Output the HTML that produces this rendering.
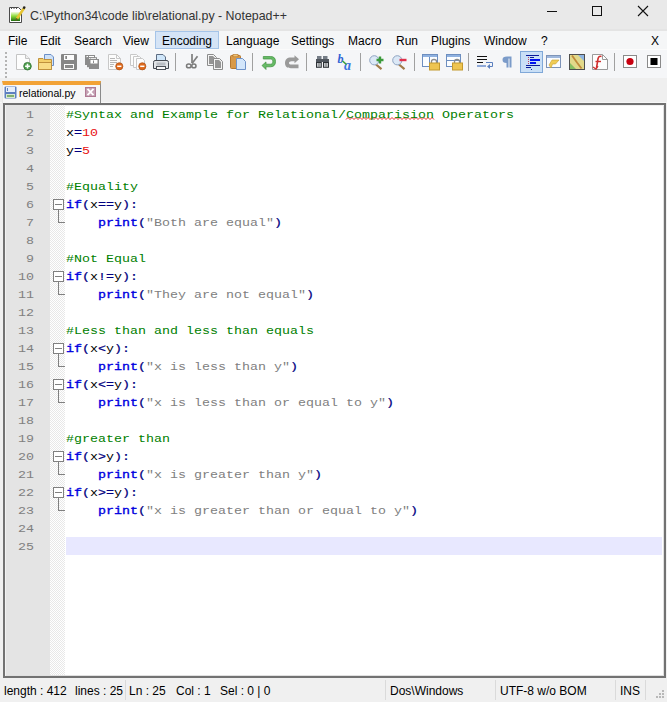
<!DOCTYPE html>
<html><head><meta charset="utf-8">
<style>
*{margin:0;padding:0;box-sizing:border-box}
html,body{width:667px;height:702px;overflow:hidden;background:#f0f0f0;font-family:"Liberation Sans",sans-serif;}
.abs{position:absolute}
#title{left:0;top:0;width:667px;height:31px;background:#e9e9e9;box-shadow:inset 0 -2px 0 #e4e4e4}
#ttext{left:30px;top:9px;font-size:12.4px;color:#333;white-space:nowrap}
#menu{left:0;top:31px;width:667px;height:18px;background:#f5f6f7}
.mi{position:absolute;margin-top:1px;font-size:12px;color:#000;white-space:nowrap}
#enc{left:155px;top:31px;width:64px;height:18px;background:#d5e4f6;border:1px solid #a5c4e8}
#toolbar{left:0;top:49px;width:667px;height:29px;background:#f5f6f8;border-top:1px solid #fbfbfb}
#tabbar{left:0;top:78px;width:667px;height:25px;background:#efefef;box-shadow:inset 0 -1px 0 #f8f8f8}
#tab{left:2px;top:81px;width:99px;height:23px;background:#f7f7f7;border-left:1px solid #e8e8e8;border-right:1px solid #8a8a8a;border-top:4px solid #f2a235}
#tabtext{left:19px;top:87px;font-size:10.5px;color:#000;white-space:nowrap}
#editor{left:3px;top:103px;width:663px;height:575px;background:#fff;border:2px solid #727272;box-shadow:inset 1px 1px 0 #f2f2f2, inset -1px -1px 0 #e0e0e0}
#lnm{left:6px;top:105px;width:44px;height:570px;background:#e4e4e4}
#fold{left:50px;top:105px;width:15px;height:570px;background-color:#fff;background-image:conic-gradient(#e8e8e8 25%,#fff 0 50%,#e8e8e8 0 75%,#fff 0);background-size:2px 2px}
#status{left:0;top:678px;width:667px;height:24px;background:#f0f0f0}
.st{position:absolute;top:684px;font-size:12px;color:#000;white-space:nowrap}
.code{position:absolute;left:66px;font-family:"Liberation Mono",monospace;font-size:13.33px;white-space:pre;line-height:18px;transform:translateY(1px) scaleY(0.82);transform-origin:0 13px}
.ln{position:absolute;left:6px;width:28px;text-align:right;font-family:"Liberation Mono",monospace;font-size:13.33px;color:#808080;line-height:18px;transform:translateY(0.5px) scaleY(0.86);transform-origin:0 13px}
.c{color:#008000}.n{color:#e81010}.k{color:#0000e0;-webkit-text-stroke:0.4px #0000e0}.o{color:#000080;-webkit-text-stroke:0.25px #000080}.s{color:#808080}.i{color:#000}
#curline{left:66px;top:537px;width:596px;height:18px;background:#e8e8ff}
.fb{position:absolute;left:53px;width:11px;height:11px;border:1px solid #808080;background:#fff}
.fb::after{content:"";position:absolute;left:1px;top:4px;width:7px;height:1px;background:#808080}
.fl{position:absolute;left:58px;width:1px;height:13px;background:#808080}
.fe{position:absolute;left:58px;width:7px;height:1px;background:#808080}
.ic{position:absolute;overflow:visible}
.sep{position:absolute;top:53px;width:1px;height:18px;background:#a0a0a0}
.pressed{position:absolute;left:520px;top:51px;width:23px;height:22px;background:#c9dff6;border:1px solid #80a8d8}
.ssep{position:absolute;top:680px;width:1px;height:20px;background:#dadada}
</style></head><body>
<div id="title" class="abs"></div>
<svg class="ic" style="left:9px;top:6px" width="17" height="17" viewBox="0 0 17 17"><defs><linearGradient id="gg" x1="0" y1="0" x2="0" y2="1"><stop offset="0" stop-color="#f4fbe0"/><stop offset="0.45" stop-color="#8fdc3c"/><stop offset="1" stop-color="#1f6e10"/></linearGradient></defs>
<path d="M0.5 1.5H9.5L12.5 4.5V16.5H0.5Z" fill="#fff" stroke="#4a4a4a"/>
<rect x="2" y="6" width="9" height="9" fill="url(#gg)"/>
<path d="M2 2.5H3M4.5 2.5H5.5M7 2.5H8" stroke="#555" stroke-width="1"/>
<path d="M15.5 1.5L8 12.5" stroke="#e6c431" stroke-width="2.6"/>
<path d="M15.8 0.5L14.5 2.8" stroke="#222" stroke-width="2.2"/>
<path d="M8 12.5L7 14.5" stroke="#6a5a20" stroke-width="1.5"/></svg>
<svg class="ic" style="left:540px;top:0px" width="127" height="30" viewBox="0 0 127 30">
<path d="M7 11.5H17" stroke="#111" stroke-width="1"/>
<rect x="52.5" y="6.5" width="9" height="9" fill="none" stroke="#111" stroke-width="1"/>
<path d="M98 6L108 16M108 6L98 16" stroke="#111" stroke-width="1.1"/>
</svg>
<div id="ttext" class="abs">C:\Python34\code lib\relational.py - Notepad++</div>
<div id="menu" class="abs"></div>
<div id="enc" class="abs"></div>
<div class="mi" style="left:8px;top:33px">File</div>
<div class="mi" style="left:40px;top:33px">Edit</div>
<div class="mi" style="left:74px;top:33px">Search</div>
<div class="mi" style="left:123px;top:33px">View</div>
<div class="mi" style="left:162px;top:33px">Encoding</div>
<div class="mi" style="left:226px;top:33px">Language</div>
<div class="mi" style="left:291px;top:33px">Settings</div>
<div class="mi" style="left:348px;top:33px">Macro</div>
<div class="mi" style="left:396px;top:33px">Run</div>
<div class="mi" style="left:431px;top:33px">Plugins</div>
<div class="mi" style="left:484px;top:33px">Window</div>
<div class="mi" style="left:541px;top:33px">?</div>
<div class="mi" style="left:651px;top:33px">X</div>
<div id="toolbar" class="abs"></div>
<!--ICONS-->
<svg class="ic" style="left:5px;top:52px" width="2" height="28" viewBox="0 0 2 28"><rect x="0" y="0" width="2" height="2" fill="#b4b4b4"/><rect x="0" y="4" width="2" height="2" fill="#b4b4b4"/><rect x="0" y="8" width="2" height="2" fill="#b4b4b4"/><rect x="0" y="12" width="2" height="2" fill="#b4b4b4"/><rect x="0" y="16" width="2" height="2" fill="#b4b4b4"/><rect x="0" y="20" width="2" height="2" fill="#b4b4b4"/><rect x="0" y="24" width="2" height="2" fill="#b4b4b4"/></svg>
<svg class="ic" style="left:16px;top:54px" width="16" height="16" viewBox="0 0 16 16"><path d="M0.5 0.5H9.5L13.5 4.5V15.5H0.5Z" fill="#fdfdfd" stroke="#c4c4c4"/><path d="M9.5 0.5V4.5H13.5" fill="#eee" stroke="#c4c4c4"/><circle cx="11.5" cy="12.2" r="3.8" fill="#4ea24e" stroke="#2f6f2f" stroke-width="0.8"/><path d="M11.5 9.8V14.6M9.1 12.2H13.9" stroke="#fff" stroke-width="1.6"/></svg>
<svg class="ic" style="left:38px;top:54px" width="16" height="16" viewBox="0 0 16 16"><path d="M6.5 0.5H13L15.5 3V11.5H6.5Z" fill="#cde0f7" stroke="#6a8ec6"/><path d="M0.5 4.5H5L6 5.5H13.5V15.5H0.5Z" fill="#f3cf6a" stroke="#bf913d"/><path d="M0.5 8.5H13.5V15.5H0.5Z" fill="#f8dc86" stroke="#bf913d"/></svg>
<svg class="ic" style="left:61px;top:54px" width="16" height="16" viewBox="0 0 16 16"><path d="M0 1Q0 0 1 0H15Q16 0 16 1V15Q16 16 15 16H1Q0 16 0 15Z" fill="#868686"/><rect x="3" y="1" width="10" height="5" fill="#fbfbfb"/><rect x="4.5" y="2" width="1.2" height="3" fill="#555"/><rect x="3" y="10" width="10" height="5" fill="#fbfbfb"/><rect x="4" y="11" width="8" height="3" fill="#8a8a8a"/></svg>
<svg class="ic" style="left:85px;top:55px" width="14" height="14" viewBox="0 0 14 14"><rect x="0" y="0" width="10" height="10" fill="#8c8c8c"/><rect x="1.5" y="1" width="1.5" height="1.3" fill="#fff"/><rect x="4" y="1" width="5" height="1.3" fill="#fff"/><rect x="2" y="2.2" width="10" height="10" fill="#8c8c8c"/><rect x="4" y="3.2" width="1.5" height="1.3" fill="#fff"/><rect x="6" y="3.2" width="5" height="1.3" fill="#fff"/><rect x="4" y="4" width="10" height="10" fill="#8c8c8c"/><rect x="5.5" y="5" width="7" height="3.5" fill="#fff"/><rect x="8" y="5.5" width="1" height="2.5" fill="#8c8c8c"/></svg>
<svg class="ic" style="left:107px;top:54px" width="16" height="16" viewBox="0 0 16 16"><path d="M1.5 0.5H9.5L13.5 4.5V15.5H1.5Z" fill="#fcfcfc" stroke="#c8c8c8"/><path d="M9.5 0.5V4.5H13.5" fill="none" stroke="#c8c8c8"/><path d="M3 4.5H8M3 6.5H10M3 8.5H10M3 10.5H7M3 12.5H6" stroke="#9a9a9a" stroke-width="0.7"/><circle cx="12.3" cy="12.3" r="3.6" fill="#e06a1c" stroke="#a8501a" stroke-width="0.7"/><path d="M10.2 12.3H14.4" stroke="#fff" stroke-width="1.5"/></svg>
<svg class="ic" style="left:130px;top:54px" width="16" height="16" viewBox="0 0 16 16"><path d="M0.5 0.5H6.5L8.5 2.5V11.5H0.5Z" fill="#fcfcfc" stroke="#c8c8c8"/><path d="M3.5 2.5H9.5L11.5 4.5V13.5H3.5Z" fill="#fcfcfc" stroke="#c8c8c8"/><path d="M6.5 4.5H12.5L14.5 6.5V15.5H6.5Z" fill="#fcfcfc" stroke="#c8c8c8"/><circle cx="12.3" cy="12.3" r="3.6" fill="#e06a1c" stroke="#a8501a" stroke-width="0.7"/><path d="M10.2 12.3H14.4" stroke="#fff" stroke-width="1.5"/></svg>
<svg class="ic" style="left:153px;top:54px" width="17" height="16" viewBox="0 0 17 16"><path d="M3.5 0.5H10L12.5 3V8.5H3.5Z" fill="#cfe6fa" stroke="#5d6c82"/><path d="M2 6.5Q0.5 6.5 0.5 8.5V14.5H15.5V8.5Q15.5 6.5 14 6.5Z" fill="#e2e5e8" stroke="#454a52"/><rect x="3.5" y="8.5" width="9" height="3" fill="#b9bec4"/><rect x="3.5" y="12.5" width="9" height="3" fill="#fafafa" stroke="#4d525a"/></svg>
<div class="sep" style="left:175px"></div>
<svg class="ic" style="left:185px;top:54px" width="14" height="15" viewBox="0 0 14 15"><path d="M7 0V9" stroke="#7e7e7e" stroke-width="1.7"/><path d="M12.5 2.3L7 9.5" stroke="#7e7e7e" stroke-width="1.7"/><ellipse cx="3.8" cy="11.9" rx="2.3" ry="1.9" fill="none" stroke="#7a7a7a" stroke-width="1.5"/><ellipse cx="8.9" cy="11.9" rx="2.1" ry="1.9" fill="none" stroke="#7a7a7a" stroke-width="1.5"/></svg>
<svg class="ic" style="left:207px;top:54px" width="16" height="16" viewBox="0 0 16 16"><path d="M0.5 0.5H6.5L9.5 3.5V11.5H0.5Z" fill="#f4f4f4" stroke="#8c8c8c"/><path d="M2 2H6L8 4V10H2Z" fill="#959595"/><path d="M6.5 4.5H12.5L15.5 7.5V15.5H6.5Z" fill="#f4f4f4" stroke="#8c8c8c"/><path d="M8 6H12L14 8V14H8Z" fill="#959595"/></svg>
<svg class="ic" style="left:230px;top:54px" width="16" height="16" viewBox="0 0 16 16"><rect x="0.5" y="1.5" width="10" height="13" rx="1" fill="#d89948" stroke="#b5772e"/><rect x="3" y="0.3" width="5" height="2.5" fill="#f0c476" stroke="#b5772e" stroke-width="0.6"/><path d="M6.5 4.5H12.5L15.5 7.5V15.5H6.5Z" fill="#d3e6fb" stroke="#6f93c9"/></svg>
<div class="sep" style="left:252px"></div>
<svg class="ic" style="left:261px;top:56px" width="15" height="14" viewBox="0 0 15 14"><path d="M2.3 0.5H9.5C13 0.5 14.5 2.3 14.5 5.5C14.5 8.7 13 10.8 9.5 10.8H5V13.5L1 9.5L5 5.9V8.2H9.5C11 8.2 11.8 7.2 11.8 5.5C11.8 3.8 11 3 9.5 3H2.3Z" fill="#66bb66" stroke="#3f8f3f" stroke-width="0.7"/></svg>
<svg class="ic" style="left:284px;top:55px" width="16" height="14" viewBox="0 0 16 14"><path d="M15 4.2L10.5 0.3V2.5H7C3 2.5 1 4.5 1 8C1 11.5 3 13.2 7 13.2H14.5V9.5H7.5C6 9.5 5 9 5 8C5 7 6 6.2 7.5 6.2H10.5V8.3Z" fill="#9a9a9a"/></svg>
<div class="sep" style="left:306px"></div>
<svg class="ic" style="left:316px;top:56px" width="13" height="12" viewBox="0 0 13 12"><rect x="1" y="0" width="4.5" height="3.5" fill="#747c86"/><rect x="7" y="0" width="4.5" height="3.5" fill="#747c86"/><rect x="0" y="3" width="13" height="3" fill="#50565e"/><rect x="0" y="6" width="5.8" height="5.8" fill="#2d3136"/><rect x="7" y="6" width="6" height="5.8" fill="#2d3136"/><rect x="1" y="7" width="3.8" height="3.8" fill="#c2c6ca"/><rect x="8" y="7" width="4" height="3.8" fill="#c2c6ca"/><rect x="2.6" y="7" width="0.8" height="3.8" fill="#666"/><rect x="9.6" y="7" width="0.8" height="3.8" fill="#666"/></svg>
<svg class="ic" style="left:338px;top:54px" width="16" height="16" viewBox="0 0 16 16"><text x="-0.5" y="8.5" font-family="Liberation Serif" font-style="italic" font-weight="bold" font-size="12" fill="#2d62d4">b</text><text x="6" y="15.5" font-family="Liberation Serif" font-style="italic" font-weight="bold" font-size="14" fill="#3a74e0">a</text><path d="M4.5 7L8.5 10.5" stroke="#3aa03a" stroke-width="1.6"/></svg>
<div class="sep" style="left:360px"></div>
<svg class="ic" style="left:369px;top:55px" width="15" height="15" viewBox="0 0 15 15"><path d="M7 9.5L12.5 14.2" stroke="#a07a48" stroke-width="2.2"/><circle cx="5.3" cy="5.3" r="4.6" fill="#dbe8f6" stroke="#8fa4c2"/><path d="M11 1.5V8.5M7.5 5H14.5" stroke="#3a9a3a" stroke-width="2.4"/></svg>
<svg class="ic" style="left:392px;top:55px" width="15" height="15" viewBox="0 0 15 15"><path d="M7 9.5L12.5 14.2" stroke="#a07a48" stroke-width="2.2"/><circle cx="5.3" cy="5.3" r="4.6" fill="#dbe8f6" stroke="#8fa4c2"/><path d="M7.5 5H14.5" stroke="#e0304a" stroke-width="2.4"/></svg>
<div class="sep" style="left:414px"></div>
<svg class="ic" style="left:422px;top:54px" width="18" height="16" viewBox="0 0 18 16"><rect x="0.5" y="0.5" width="15" height="12" fill="#fbfdff" stroke="#6d8ebf"/><rect x="1" y="1" width="14" height="2" fill="#8fb1e0"/><path d="M7.5 3V12.5" stroke="#6d8ebf"/><path d="M9.5 9V7.5Q9.5 5.5 12 5.5Q14.5 5.5 14.5 7.5V9" fill="none" stroke="#8c8c8c" stroke-width="1.3"/><rect x="7.5" y="9" width="10" height="7" fill="#eec450" stroke="#c49a2e"/></svg>
<svg class="ic" style="left:446px;top:54px" width="18" height="16" viewBox="0 0 18 16"><rect x="0.5" y="0.5" width="14" height="12" fill="#fbfdff" stroke="#6d8ebf"/><rect x="1" y="1" width="13" height="2" fill="#8fb1e0"/><path d="M0.5 6.5H14.5" stroke="#6d8ebf"/><path d="M8.5 9V7.5Q8.5 5.5 11 5.5Q13.5 5.5 13.5 7.5V9" fill="none" stroke="#8c8c8c" stroke-width="1.3"/><rect x="6.5" y="9" width="10" height="7" fill="#eec450" stroke="#c49a2e"/></svg>
<div class="sep" style="left:468px"></div>
<svg class="ic" style="left:477px;top:55px" width="17" height="14" viewBox="0 0 17 14"><rect x="0" y="1" width="10" height="1" fill="#111"/><rect x="0" y="4" width="10" height="1" fill="#111"/><rect x="0" y="7" width="6" height="1" fill="#111"/><path d="M9 7.5H15.5V11.5H12" fill="none" stroke="#5a7fbf" stroke-width="1"/><path d="M10 11.5L13 9V14Z" fill="#5a7fbf"/><rect x="0" y="10" width="9" height="2" fill="#8fa9d8"/></svg>
<svg class="ic" style="left:502px;top:56px" width="10" height="12" viewBox="0 0 10 12"><path d="M5 0.5H9.5V11.5H7.5V2.5H6.5V11.5H4.5V7Q0.5 7 0.5 3.8Q0.5 0.5 5 0.5Z" fill="#7b9bc9"/></svg>
<div class="pressed"></div>
<svg class="ic" style="left:526px;top:54px" width="14" height="16" viewBox="0 0 14 16"><rect x="0" y="1" width="13" height="1" fill="#0b1a9a"/><rect x="4" y="3" width="4" height="1" fill="#0b1a9a"/><rect x="4" y="5" width="10" height="2" fill="#0010f0"/><rect x="4" y="8" width="6" height="2" fill="#0010f0"/><rect x="0" y="11" width="14" height="1" fill="#0b1a9a"/><rect x="0" y="13" width="5" height="1" fill="#0b1a9a"/><rect x="5" y="15" width="1" height="1" fill="#0b1a9a"/><path d="M2.5 3V10.5" stroke="#c04060" stroke-width="1" stroke-dasharray="1 1"/></svg>
<svg class="ic" style="left:546px;top:55px" width="15" height="14" viewBox="0 0 15 14"><rect x="0.5" y="0.5" width="14" height="12" fill="#fafcff" stroke="#7d93b8"/><rect x="1" y="1" width="13" height="2" fill="#9eb7dc"/><path d="M3 10L6 5H13L9.5 9H6.5L5 13Z" fill="#f0cc55" stroke="#c8a030" stroke-width="0.6"/></svg>
<svg class="ic" style="left:569px;top:54px" width="16" height="16" viewBox="0 0 16 16"><rect x="0.5" y="0.5" width="15" height="15" fill="#e2d98a" stroke="#4e4e4e"/><path d="M9 1H15V7Z" fill="#8db4e2"/><path d="M1 9L1 15H7Z" fill="#86bf62"/><path d="M3 1.5L8 8.5L12.5 14.5" fill="none" stroke="#c08a3a" stroke-width="1.8"/></svg>
<svg class="ic" style="left:592px;top:54px" width="16" height="16" viewBox="0 0 16 16"><path d="M0.5 0.5H10.5L15.5 5.5V15.5H0.5Z" fill="#fdfdfd" stroke="#9a9a9a"/><path d="M10.5 0.5V5.5H15.5" fill="none" stroke="#9a9a9a"/><path d="M9.5 2.5Q6.5 1.5 6 5L4.5 14" fill="none" stroke="#d03030" stroke-width="1.6"/><path d="M3.5 7.5H9" stroke="#d03030" stroke-width="1.4"/><path d="M1 13L4 15L6 12" fill="none" stroke="#d03030" stroke-width="1.3"/></svg>
<div class="sep" style="left:614px"></div>
<svg class="ic" style="left:623px;top:55px" width="14" height="13" viewBox="0 0 14 13"><rect x="0.5" y="0.5" width="13" height="12" fill="#fff" stroke="#8a8a8a"/><circle cx="7" cy="6.5" r="3.6" fill="#c80010"/></svg>
<svg class="ic" style="left:647px;top:55px" width="14" height="13" viewBox="0 0 14 13"><rect x="0.5" y="0.5" width="13" height="12" fill="#fff" stroke="#8a8a8a"/><rect x="3.5" y="3" width="7" height="7" fill="#000"/></svg>
<!--/ICONS-->
<div id="tabbar" class="abs"></div>
<div id="tab" class="abs"></div>
<div id="tabtext" class="abs">relational.py</div>
<svg class="ic" style="left:4px;top:86px" width="13" height="13" viewBox="0 0 13 13"><rect x="0.5" y="0.5" width="12" height="12" fill="#5d7fc0" rx="1"/><rect x="2" y="1" width="9" height="5" fill="#e6eefa"/><rect x="3" y="2" width="1" height="3" fill="#5d7fc0"/><rect x="2" y="8" width="9" height="4" fill="#d8e8d0"/><rect x="3" y="9" width="7" height="2" fill="#7fb070"/></svg>
<svg class="ic" style="left:85px;top:87px" width="11" height="10" viewBox="0 0 11 10"><rect x="0" y="0" width="11" height="10" fill="#b07a94"/><rect x="1" y="1" width="9" height="8" fill="#c4a0b3"/><path d="M2.5 1.8L8.5 8.2M8.5 1.8L2.5 8.2" stroke="#fff" stroke-width="1.8"/></svg>
<div id="editor" class="abs"></div>
<div id="lnm" class="abs"></div>
<div id="fold" class="abs"></div>

<div id="curline" class="abs"></div>
<svg class="ic" style="left:346px;top:117px" width="90" height="3" viewBox="0 0 90 3"><path d="M0 2.5 L0 2.5 L2 0.5 L4 2.5 L6 0.5 L8 2.5 L10 0.5 L12 2.5 L14 0.5 L16 2.5 L18 0.5 L20 2.5 L22 0.5 L24 2.5 L26 0.5 L28 2.5 L30 0.5 L32 2.5 L34 0.5 L36 2.5 L38 0.5 L40 2.5 L42 0.5 L44 2.5 L46 0.5 L48 2.5 L50 0.5 L52 2.5 L54 0.5 L56 2.5 L58 0.5 L60 2.5 L62 0.5 L64 2.5 L66 0.5 L68 2.5 L70 0.5 L72 2.5 L74 0.5 L76 2.5 L78 0.5 L80 2.5 L82 0.5 L84 2.5 L86 0.5 L88 2.5" fill="none" stroke="#e81818" stroke-width="0.9"/></svg>
<div class="fb" style="top:199px"></div><div class="fl" style="top:210px"></div><div class="fe" style="top:222px"></div>
<div class="fb" style="top:271px"></div><div class="fl" style="top:282px"></div><div class="fe" style="top:294px"></div>
<div class="fb" style="top:343px"></div><div class="fl" style="top:354px"></div><div class="fe" style="top:366px"></div>
<div class="fb" style="top:379px"></div><div class="fl" style="top:390px"></div><div class="fe" style="top:402px"></div>
<div class="fb" style="top:451px"></div><div class="fl" style="top:462px"></div><div class="fe" style="top:474px"></div>
<div class="fb" style="top:487px"></div><div class="fl" style="top:498px"></div><div class="fe" style="top:510px"></div>
<div class="ln" style="top:105px">1</div>
<div class="code" style="top:105px"><span class="c">#Syntax and Example for Relational/Comparision Operators</span></div>
<div class="ln" style="top:123px">2</div>
<div class="code" style="top:123px"><span class="i">x</span><span class="o">=</span><span class="n">10</span></div>
<div class="ln" style="top:141px">3</div>
<div class="code" style="top:141px"><span class="i">y</span><span class="o">=</span><span class="n">5</span></div>
<div class="ln" style="top:159px">4</div>
<div class="ln" style="top:177px">5</div>
<div class="code" style="top:177px"><span class="c">#Equality</span></div>
<div class="ln" style="top:195px">6</div>
<div class="code" style="top:195px"><span class="k">if</span><span class="o">(</span><span class="i">x</span><span class="o">==</span><span class="i">y</span><span class="o">):</span></div>
<div class="ln" style="top:213px">7</div>
<div class="code" style="top:213px"><span class="i">    </span><span class="k">print</span><span class="o">(</span><span class="s">&quot;Both are equal&quot;</span><span class="o">)</span></div>
<div class="ln" style="top:231px">8</div>
<div class="ln" style="top:249px">9</div>
<div class="code" style="top:249px"><span class="c">#Not Equal</span></div>
<div class="ln" style="top:267px">10</div>
<div class="code" style="top:267px"><span class="k">if</span><span class="o">(</span><span class="i">x</span><span class="o">!=</span><span class="i">y</span><span class="o">):</span></div>
<div class="ln" style="top:285px">11</div>
<div class="code" style="top:285px"><span class="i">    </span><span class="k">print</span><span class="o">(</span><span class="s">&quot;They are not equal&quot;</span><span class="o">)</span></div>
<div class="ln" style="top:303px">12</div>
<div class="ln" style="top:321px">13</div>
<div class="code" style="top:321px"><span class="c">#Less than and less than equals</span></div>
<div class="ln" style="top:339px">14</div>
<div class="code" style="top:339px"><span class="k">if</span><span class="o">(</span><span class="i">x</span><span class="o">&lt;</span><span class="i">y</span><span class="o">):</span></div>
<div class="ln" style="top:357px">15</div>
<div class="code" style="top:357px"><span class="i">    </span><span class="k">print</span><span class="o">(</span><span class="s">&quot;x is less than y&quot;</span><span class="o">)</span></div>
<div class="ln" style="top:375px">16</div>
<div class="code" style="top:375px"><span class="k">if</span><span class="o">(</span><span class="i">x</span><span class="o">&lt;=</span><span class="i">y</span><span class="o">):</span></div>
<div class="ln" style="top:393px">17</div>
<div class="code" style="top:393px"><span class="i">    </span><span class="k">print</span><span class="o">(</span><span class="s">&quot;x is less than or equal to y&quot;</span><span class="o">)</span></div>
<div class="ln" style="top:411px">18</div>
<div class="ln" style="top:429px">19</div>
<div class="code" style="top:429px"><span class="c">#greater than</span></div>
<div class="ln" style="top:447px">20</div>
<div class="code" style="top:447px"><span class="k">if</span><span class="o">(</span><span class="i">x</span><span class="o">&gt;</span><span class="i">y</span><span class="o">):</span></div>
<div class="ln" style="top:465px">21</div>
<div class="code" style="top:465px"><span class="i">    </span><span class="k">print</span><span class="o">(</span><span class="s">&quot;x is greater than y&quot;</span><span class="o">)</span></div>
<div class="ln" style="top:483px">22</div>
<div class="code" style="top:483px"><span class="k">if</span><span class="o">(</span><span class="i">x</span><span class="o">&gt;=</span><span class="i">y</span><span class="o">):</span></div>
<div class="ln" style="top:501px">23</div>
<div class="code" style="top:501px"><span class="i">    </span><span class="k">print</span><span class="o">(</span><span class="s">&quot;x is greater than or equal to y&quot;</span><span class="o">)</span></div>
<div class="ln" style="top:519px">24</div>
<div class="ln" style="top:537px">25</div>
<div id="status" class="abs"></div>
<div class="ssep" style="left:125px"></div><div class="ssep" style="left:385px"></div><div class="ssep" style="left:495px"></div><div class="ssep" style="left:615px"></div><div class="ssep" style="left:645px"></div><svg class="ic" style="left:655px;top:689px" width="10" height="10" viewBox="0 0 10 10"><rect x="7" y="1" width="2" height="2" fill="#b8b8b8"/><rect x="4" y="4" width="2" height="2" fill="#b8b8b8"/><rect x="7" y="4" width="2" height="2" fill="#b8b8b8"/><rect x="1" y="7" width="2" height="2" fill="#b8b8b8"/><rect x="4" y="7" width="2" height="2" fill="#b8b8b8"/><rect x="7" y="7" width="2" height="2" fill="#b8b8b8"/></svg>
<div class="st" style="left:4px">length : 412</div>
<div class="st" style="left:75px">lines : 25</div>
<div class="st" style="left:129px">Ln : 25</div>
<div class="st" style="left:176px">Col : 1</div>
<div class="st" style="left:220px">Sel : 0 | 0</div>
<div class="st" style="left:390px">Dos\Windows</div>
<div class="st" style="left:500px">UTF-8 w/o BOM</div>
<div class="st" style="left:620px">INS</div>
</body></html>
